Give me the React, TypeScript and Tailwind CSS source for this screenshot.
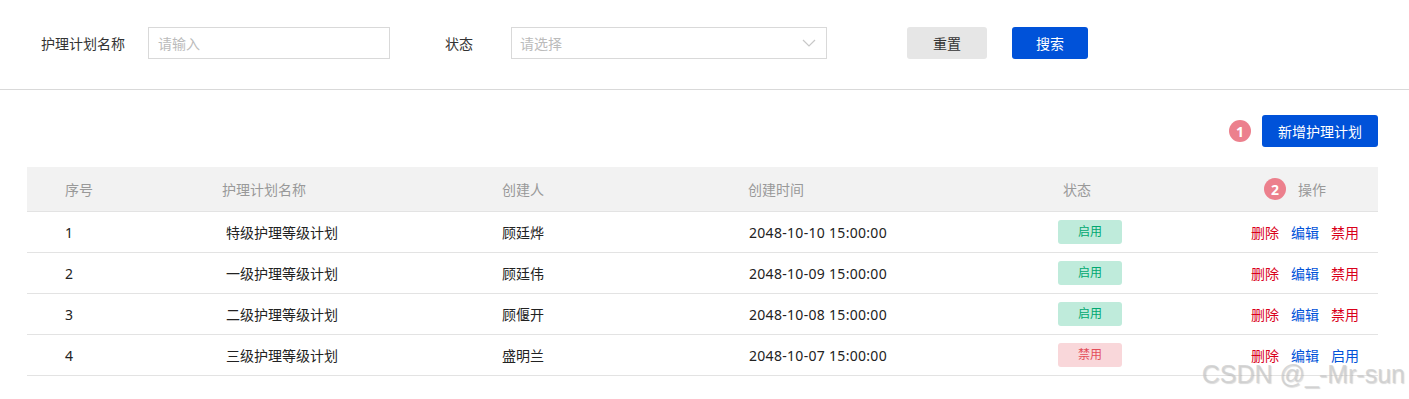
const rows = [
  { no: 1, name: "特级护理等级计划", creator: "顾廷烨", time: "2048-10-10 15:00:00", on: true },
  { no: 2, name: "一级护理等级计划", creator: "顾廷伟", time: "2048-10-09 15:00:00", on: true },
  { no: 3, name: "二级护理等级计划", creator: "顾偃开", time: "2048-10-08 15:00:00", on: true },
  { no: 4, name: "三级护理等级计划", creator: "盛明兰", time: "2048-10-07 15:00:00", on: false },
];

const cols = "grid grid-cols-[195px_280px_246px_310px_1fr_1fr] items-center";

function Badge({ n }: { n: number }) {
  return (
    <span className="flex h-[22px] w-[22px] items-center justify-center rounded-full bg-[#ec808d] text-[14px] font-bold text-white">
      {n}
    </span>
  );
}

export default function App() {
  return (
    <div className="relative min-h-[399px] bg-white text-[14px] text-[#333] [font-family:'Noto_Sans','Noto_Sans_CJK_SC',sans-serif]">
      {/* filter bar */}
      <div className="flex h-[90px] items-start border-b border-[#d9d9d9] pl-[41px] pt-[27px]">
        <span className="flex h-[32px] w-[107px] items-center text-[#333]">护理计划名称</span>
        <div className="flex h-[32px] w-[242px] items-center border border-[#d9d9d9] px-[9px] text-[#bbb]">请输入</div>
        <span className="ml-[55px] flex h-[32px] w-[66px] items-center text-[#333]">状态</span>
        <div className="flex h-[32px] w-[316px] items-center justify-between border border-[#d9d9d9] pl-[8px] pr-[10px] text-[#bbb]">
          <span>请选择</span>
          <svg width="14" height="8" viewBox="0 0 14 8" fill="none">
            <path d="M1 1l6 6 6-6" stroke="#c8c8c8" strokeWidth="1.2" />
          </svg>
        </div>
        <button className="ml-[80px] h-[32px] w-[80px] rounded-[3px] bg-[#e6e6e6] text-[#333]">重置</button>
        <button className="ml-[25px] h-[32px] w-[76px] rounded-[3px] bg-[#0052d9] text-white">搜索</button>
      </div>

      {/* toolbar */}
      <div className="flex items-center justify-end gap-[11px] pr-[31px] pt-[25px]">
        <Badge n={1} />
        <button className="h-[32px] w-[116px] rounded-[3px] bg-[#0052d9] text-white">新增护理计划</button>
      </div>

      {/* table */}
      <div className="ml-[27px] mt-[20px] w-[1351px]">
        <div className={`${cols} h-[45px] border-b border-[#e3e3e3] bg-[#f2f2f2] text-[#999]`}>
          <span className="pl-[38px]">序号</span>
          <span>护理计划名称</span>
          <span>创建人</span>
          <span>创建时间</span>
          <span className="pl-[5px]">状态</span>
          <span className="flex items-center justify-end gap-[12px] pr-[52px]">
            <Badge n={2} />
            操作
          </span>
        </div>
        {rows.map((r) => (
          <div key={r.no} className={`${cols} h-[41px] border-b border-[#e3e3e3] text-[#222]`}>
            <span className="pl-[38px]">{r.no}</span>
            <span className="pl-[4px]">{r.name}</span>
            <span>{r.creator}</span>
            <span className="pl-[1px] tracking-[0.3px]">{r.time}</span>
            <span>
              <span
                className={`flex h-[24px] w-[64px] items-center justify-center rounded-[3px] text-[12px] ${
                  r.on ? "bg-[#bfebdb] text-[#00a870]" : "bg-[#f9d7da] text-[#e34d59]"
                }`}
              >
                {r.on ? "启用" : "禁用"}
              </span>
            </span>
            <span className="flex justify-end gap-[12px] pr-[19px]">
              <span className="text-[#d9001b]">删除</span>
              <span className="text-[#0052d9]">编辑</span>
              <span className={r.on ? "text-[#d9001b]" : "text-[#0052d9]"}>{r.on ? "禁用" : "启用"}</span>
            </span>
          </div>
        ))}
      </div>

      {/* watermark */}
      <span className="absolute bottom-[6px] right-[4px] text-[25px] text-[#cdcdcd]/80 [font-family:'Liberation_Sans',sans-serif] [text-shadow:1px_1px_1px_rgba(0,0,0,0.15)]">
        CSDN @_-Mr-sun
      </span>
    </div>
  );
}
